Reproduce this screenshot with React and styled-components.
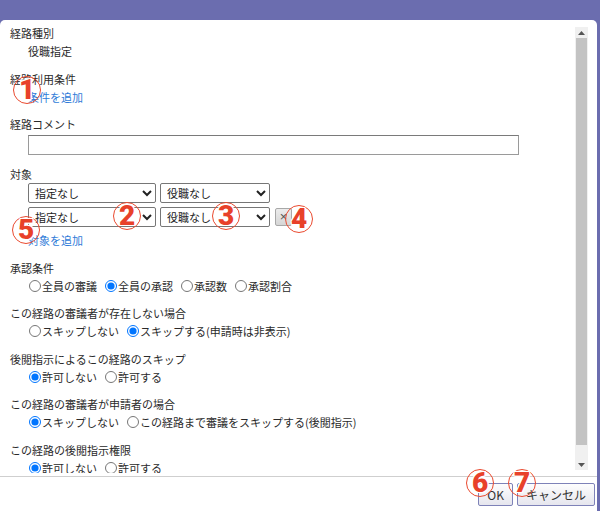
import React from 'react';
import styled, { createGlobalStyle } from 'styled-components';

const GlobalStyle = createGlobalStyle`
  html, body { margin: 0; padding: 0; background: #fff; }
  body { font-family: "Noto Sans CJK JP", "Noto Sans", sans-serif; }
`;

const Frame = styled.div`
  position: relative;
  width: 600px;
  height: 511px;
  box-sizing: border-box;
  background: #6b6daf;
  padding: 20px 3px 0 0;
  overflow: hidden;
`;

const Body = styled.div`
  height: 100%;
  background: #fff;
  border-radius: 5px 5px 0 0;
  display: flex;
  flex-direction: column;
`;

const Main = styled.div`
  display: flex;
  height: 456px;
`;

const Content = styled.div`
  flex: 1;
  overflow: hidden;
  margin-bottom: 3px;
  padding: 4px 0 0 10px;
  color: #2a2a2a;
  font-size: 11px;
  line-height: 18px;
`;

const Section = styled.div`
  margin-bottom: 9.5px;
`;

const Label = styled.div`
  height: 18px;
  white-space: nowrap;
`;

const Control = styled.div`
  padding-left: 18px;
  min-height: 18px;
  white-space: nowrap;
`;

const Link = styled.a`
  display: inline-block;
  color: #2f7bd8;
  text-decoration: none;
  margin-top: ${(p) => p.$mt || 0}px;
`;

const TextInput = styled.input`
  display: block;
  margin-top: 2px;
  width: 491px;
  height: 20px;
  box-sizing: border-box;
  border: 1px solid #9a9a9a;
  border-top-color: #7a7a7a;
  padding: 0 3px;
  font: inherit;
`;

const SelectRow = styled.div`
  display: flex;
  align-items: center;
  gap: 4px;
  margin-bottom: 4px;
`;

const Select = styled.select`
  width: ${(p) => p.$w}px;
  height: 20px;
  box-sizing: border-box;
  border: 1px solid #767676;
  border-radius: 2px;
  background: #fff;
  color: #222;
  font-family: inherit;
  font-size: 11px;
  padding: 0 0 0 2px;
`;

const RemoveButton = styled.button`
  margin-left: 1px;
  width: 17px;
  height: 18px;
  box-sizing: border-box;
  padding: 0;
  border: 1px solid #a8a8a8;
  border-radius: 2px;
  background: linear-gradient(#ececec, #d6d6d6);
  color: #555;
  font-family: "Liberation Sans", sans-serif;
  font-size: 13px;
  line-height: 16px;
`;

const RadioRow = styled.div`
  display: flex;
  align-items: center;
  height: 18px;
`;

const RadioItem = styled.label`
  display: inline-flex;
  align-items: center;
  margin-right: 7px;
  white-space: nowrap;
`;

const Radio = styled.input`
  width: 12px;
  height: 12px;
  margin: 0 1px 0 1px;
`;

const ScrollTrack = styled.div`
  width: 13px;
  margin: 7px 9px 6px 0;
  background: #f0f0f0;
  display: flex;
  flex-direction: column;
`;

const ArrowBtn = styled.div`
  height: 11px;
  display: flex;
  align-items: center;
  justify-content: center;
`;

const Thumb = styled.div`
  flex: 1;
  margin: 0 1px 14px 1px;
  background: #c3c3c3;
`;

const Footer = styled.div`
  flex: 1;
  display: flex;
  justify-content: flex-end;
  align-items: flex-start;
  gap: 4px;
  padding: 6px 2px 0 0;
  border-top: 1px solid #cfcfcf;
`;

const FooterButton = styled.button`
  height: 23px;
  padding: 0 8px;
  border: 1px solid #7e82b8;
  border-radius: 2px;
  background: linear-gradient(#fdfdfd, #e6e6ee);
  color: #333;
  font-family: inherit;
  font-size: 12px;
`;

const Mark = styled.div`
  position: absolute;
  left: ${(p) => p.$x - 14}px;
  top: ${(p) => p.$y - 14}px;
  width: 28px;
  height: 28px;
  box-sizing: border-box;
  border: 1.5px solid #ea4a2f;
  border-radius: 50%;
  display: flex;
  align-items: center;
  justify-content: center;
  color: #e8412a;
  font-family: Roboto, "Liberation Sans", sans-serif;
  font-weight: 900;
  font-size: 28px;
  line-height: 1;
  text-shadow: 1px 0 #fff, -1px 0 #fff, 0 1px #fff, 0 -1px #fff,
    1px 1px #fff, -1px -1px #fff, 1px -1px #fff, -1px 1px #fff;
  pointer-events: none;
`;

const Triangle = ({ up }) => (
  <svg width="7" height="4" viewBox="0 0 7 4">
    <path d={up ? 'M0 4 L3.5 0 L7 4 Z' : 'M0 0 L3.5 4 L7 0 Z'} fill="#555" />
  </svg>
);

const RadioGroup = ({ name, options, checked }) => (
  <RadioRow>
    {options.map((o, i) => (
      <RadioItem key={o}>
        <Radio type="radio" name={name} defaultChecked={i === checked} />
        {o}
      </RadioItem>
    ))}
  </RadioRow>
);

const marks = [
  { n: 1, x: 27, y: 90 },
  { n: 2, x: 127, y: 216 },
  { n: 3, x: 226, y: 216 },
  { n: 4, x: 299, y: 219 },
  { n: 5, x: 26, y: 230 },
  { n: 6, x: 480, y: 483 },
  { n: 7, x: 522, y: 483 },
];

export default function App() {
  return (
    <>
      <GlobalStyle />
      <Frame>
        <Body>
          <Main>
            <Content>
              <Section>
                <Label>経路種別</Label>
                <Control>役職指定</Control>
              </Section>
              <Section>
                <Label>経路利用条件</Label>
                <Control>
                  <Link href="#">条件を追加</Link>
                </Control>
              </Section>
              <Section>
                <Label>経路コメント</Label>
                <Control>
                  <TextInput type="text" />
                </Control>
              </Section>
              <Section>
                <Label>対象</Label>
                <Control>
                  <SelectRow>
                    <Select $w={128}>
                      <option>指定なし</option>
                    </Select>
                    <Select $w={110}>
                      <option>役職なし</option>
                    </Select>
                  </SelectRow>
                  <SelectRow>
                    <Select $w={128}>
                      <option>指定なし</option>
                    </Select>
                    <Select $w={110}>
                      <option>役職なし</option>
                    </Select>
                    <RemoveButton>×</RemoveButton>
                  </SelectRow>
                  <Link href="#" $mt={0.5}>対象を追加</Link>
                </Control>
              </Section>
              <Section>
                <Label>承認条件</Label>
                <Control>
                  <RadioGroup
                    name="cond"
                    options={['全員の審議', '全員の承認', '承認数', '承認割合']}
                    checked={1}
                  />
                </Control>
              </Section>
              <Section>
                <Label>この経路の審議者が存在しない場合</Label>
                <Control>
                  <RadioGroup
                    name="absent"
                    options={['スキップしない', 'スキップする(申請時は非表示)']}
                    checked={1}
                  />
                </Control>
              </Section>
              <Section>
                <Label>後閲指示によるこの経路のスキップ</Label>
                <Control>
                  <RadioGroup name="skip" options={['許可しない', '許可する']} checked={0} />
                </Control>
              </Section>
              <Section>
                <Label>この経路の審議者が申請者の場合</Label>
                <Control>
                  <RadioGroup
                    name="self"
                    options={['スキップしない', 'この経路まで審議をスキップする(後閲指示)']}
                    checked={0}
                  />
                </Control>
              </Section>
              <Section>
                <Label>この経路の後閲指示権限</Label>
                <Control>
                  <RadioGroup name="auth" options={['許可しない', '許可する']} checked={0} />
                </Control>
              </Section>
            </Content>
            <ScrollTrack>
              <ArrowBtn>
                <Triangle up />
              </ArrowBtn>
              <Thumb />
              <ArrowBtn>
                <Triangle />
              </ArrowBtn>
            </ScrollTrack>
          </Main>
          <Footer>
            <FooterButton>OK</FooterButton>
            <FooterButton>キャンセル</FooterButton>
          </Footer>
        </Body>
        {marks.map((m) => (
          <Mark key={m.n} $x={m.x} $y={m.y}>
            {m.n}
          </Mark>
        ))}
      </Frame>
    </>
  );
}
